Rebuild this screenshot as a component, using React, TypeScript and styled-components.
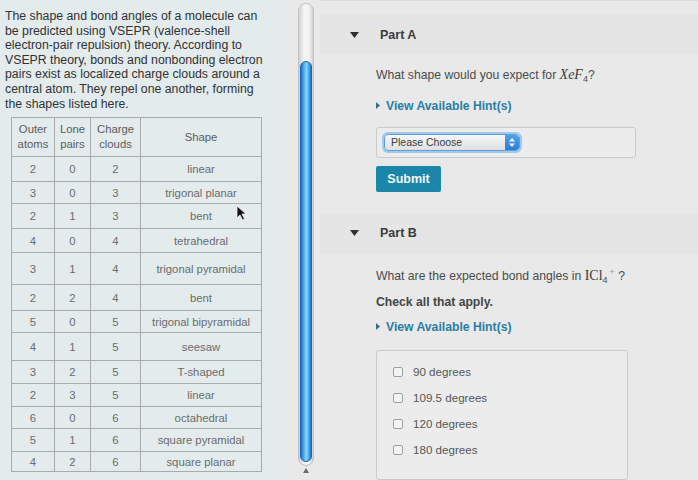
import React from "react";
import styled, { createGlobalStyle } from "styled-components";

const GlobalStyle = createGlobalStyle`
    html, body {
        margin: 0;
        padding: 0;
        background: #e8e9e8;
    }
    * {
        box-sizing: border-box;
    }
`

const Page = styled.div`
    width: 698px;
    height: 480px;
    display: flex;
    flex-direction: row;
    overflow: hidden;
    background: #e8e9e8;
    font-family: "Liberation Sans", Arial, sans-serif;
`

const LeftPane = styled.div`
    position: relative;
    width: 286px;
    height: 100%;
    background: #e3ebed;
    padding: 9px 0 0 5px;
    flex-shrink: 0;
`

const Intro = styled.p`
    margin: 0;
    font-size: 12.3px;
    line-height: 14.6px;
    color: #303234;
    white-space: nowrap;
`

const Table = styled.table`
    margin: 6px 0 0 6px;
    width: 251px;
    border-collapse: collapse;
    border: 1px solid #9c9fa0;
    font-size: 11.3px;
    color: #6a6c6d;
    text-align: center;

    th, td {
        border: 1px solid #a8abac;
        padding: 0;
    }
    th {
        font-weight: 400;
        line-height: 15px;
        color: #5a5c5e;
        height: 39px;
    }
`

const Row = styled.tr<{ $h: number }>`
    height: ${(p) => p.$h}px;
`

const Cursor = styled.svg`
    position: absolute;
    left: 236px;
    top: 205px;
`

const ScrollColumn = styled.div`
    width: 34px;
    height: 100%;
    display: flex;
    flex-direction: column;
    align-items: center;
    padding: 3px 0 0 6px;
    flex-shrink: 0;
`

const Track = styled.div`
    width: 16px;
    height: 463px;
    border-radius: 8px;
    background: linear-gradient(90deg, #cfd2d3, #f6f7f7 40%, #f3f4f4 70%, #cfd2d3);
    border: 1px solid #bfc2c3;
    display: flex;
    flex-direction: column;
    padding: 57px 1px 3px;
`

const Thumb = styled.div`
    flex: 1;
    border-radius: 7px;
    background: linear-gradient(90deg, #1f6fc9, #4fb0ee 30%, #8ad3f8 55%, #45a6e6 80%, #1f6fc9);
    border: 1px solid #1d63b5;
`

const ScrollArrow = styled.div`
    margin-top: 2px;
    width: 0;
    height: 0;
    border-left: 3px solid transparent;
    border-right: 3px solid transparent;
    border-bottom: 5px solid #6b6e70;
`

const RightPane = styled.div`
    flex: 1;
    height: 100%;
    padding-top: 14px;
    display: flex;
    flex-direction: column;
    border-top: 1px solid #d9dbdb;
`

const PartHeader = styled.div`
    height: 44px;
    display: flex;
    align-items: center;
    gap: 21px;
    padding-left: 30px;
    background: #e4e5e4;
    font-size: 12.5px;
    font-weight: 700;
    color: #3a3b3c;
`

const PartBody = styled.div<{ $top: number }>`
    padding-left: 56px;
    padding-top: ${(p) => p.$top}px;
    display: flex;
    flex-direction: column;
    align-items: flex-start;
`

const Question = styled.div<{ $gap: number }>`
    font-size: 12.2px;
    line-height: 16px;
    color: #4a4c4d;
    margin-bottom: ${(p) => p.$gap}px;
`

const Math = styled.span<{ $italic?: boolean }>`
    font-family: "Liberation Serif", "Times New Roman", serif;
    font-size: 14px;
    font-style: ${(p) => (p.$italic ? "italic" : "normal")};
    color: #3c3d3e;
`

const Sub = styled.sub`
    font-size: 9px;
    vertical-align: -3px;
`

const Sup = styled.sup`
    font-size: 9px;
    color: #9a9c9d;
    vertical-align: 5px;
    margin-left: 2px;
`

const Strong = styled.div`
    font-size: 12.2px;
    line-height: 16px;
    font-weight: 700;
    color: #434546;
    margin-bottom: 9px;
`

const Hint = styled.div<{ $gap: number }>`
    display: flex;
    align-items: center;
    gap: 6px;
    font-size: 12.2px;
    line-height: 16px;
    font-weight: 700;
    color: #2a7ea6;
    margin-bottom: ${(p) => p.$gap}px;
`

const AnswerBox = styled.div<{ $w: number; $h: number }>`
    width: ${(p) => p.$w}px;
    height: ${(p) => p.$h}px;
    border: 1px solid #c9cbcb;
    border-radius: 3px;
    background: #ebeceb;
`

const SelectBox = styled(AnswerBox)`
    display: flex;
    align-items: center;
    padding-left: 7px;
`

const FakeSelect = styled.div`
    width: 136px;
    height: 17px;
    border: 1px solid #5b9fdc;
    border-radius: 4px;
    box-shadow: 0 0 0 2px rgba(110, 170, 230, 0.55);
    background: linear-gradient(#f6f7f7, #dfe1e2);
    display: flex;
    align-items: center;
    justify-content: space-between;
    padding-left: 6px;
    font-size: 10.5px;
    color: #3a3b3c;
    overflow: hidden;
`

const Stepper = styled.div`
    width: 14px;
    height: 100%;
    background: linear-gradient(#4ea4ea, #2b7dd3);
    border-radius: 0 3px 3px 0;
    display: flex;
    align-items: center;
    justify-content: center;
`

const SubmitButton = styled.button`
    margin-top: 8px;
    width: 65px;
    height: 26px;
    border: 0;
    border-radius: 2px;
    background: #1b86a8;
    color: #f4f8fa;
    font-family: "Liberation Sans", Arial, sans-serif;
    font-size: 12.5px;
    font-weight: 700;
    padding: 0;
`

const Spacer = styled.div<{ $h: number }>`
    height: ${(p) => p.$h}px;
`

const OptionList = styled(AnswerBox)`
    padding: 8px 0 0 16px;
    display: flex;
    flex-direction: column;
`

const Option = styled.label`
    height: 26px;
    display: flex;
    align-items: center;
    gap: 10px;
    font-size: 11.6px;
    color: #555758;
`

const Check = styled.span`
    width: 10px;
    height: 10px;
    border: 1px solid #9da0a1;
    border-radius: 2px;
    background: #f3f4f4;
`

const introLines = [
    "The shape and bond angles of a molecule can",
    "be predicted using VSEPR (valence-shell",
    "electron-pair repulsion) theory. According to",
    "VSEPR theory, bonds and nonbonding electron",
    "pairs exist as localized charge clouds around a",
    "central atom. They repel one another, forming",
    "the shapes listed here.",
];

const rows: [string, string, string, string, number][] = [
    ["2", "0", "2", "linear", 25],
    ["3", "0", "3", "trigonal planar", 22],
    ["2", "1", "3", "bent", 25],
    ["4", "0", "4", "tetrahedral", 24],
    ["3", "1", "4", "trigonal pyramidal", 32],
    ["2", "2", "4", "bent", 26],
    ["5", "0", "5", "trigonal bipyramidal", 22],
    ["4", "1", "5", "seesaw", 28],
    ["3", "2", "5", "T-shaped", 23],
    ["2", "3", "5", "linear", 23],
    ["6", "0", "6", "octahedral", 22],
    ["5", "1", "6", "square pyramidal", 23],
    ["4", "2", "6", "square planar", 20],
];

function DownTriangle() {
    return (
        <svg width="9" height="6" viewBox="0 0 9 6">
            <polygon points="0,0 9,0 4.5,6" fill="#2e3031" />
        </svg>
    );
}

function HintLink({ gap }: { gap: number }) {
    return (
        <Hint $gap={gap}>
            <svg width="4" height="7" viewBox="0 0 4 7">
                <polygon points="0,0 4,3.5 0,7" fill="#3a6f8a" />
            </svg>
            View Available Hint(s)
        </Hint>
    );
}

export default function App() {
    return (
        <>
            <GlobalStyle />
            <Page>
                <LeftPane>
                    <Intro>
                        {introLines.map((l, i) => (
                            <React.Fragment key={i}>
                                {l}
                                {i < introLines.length - 1 && <br />}
                            </React.Fragment>
                        ))}
                    </Intro>
                    <Table>
                        <colgroup>
                            <col style={{ width: 43 }} />
                            <col style={{ width: 36 }} />
                            <col style={{ width: 50 }} />
                            <col />
                        </colgroup>
                        <thead>
                            <tr>
                                <th>Outer<br />atoms</th>
                                <th>Lone<br />pairs</th>
                                <th>Charge<br />clouds</th>
                                <th>Shape</th>
                            </tr>
                        </thead>
                        <tbody>
                            {rows.map((r, i) => (
                                <Row key={i} $h={r[4]}>
                                    <td>{r[0]}</td>
                                    <td>{r[1]}</td>
                                    <td>{r[2]}</td>
                                    <td>{r[3]}</td>
                                </Row>
                            ))}
                        </tbody>
                    </Table>
                    <Cursor width="11" height="16" viewBox="0 0 11 16">
                        <polygon points="1,1 1,13 4,10 6.5,15 8.5,14 6,9 10,9" fill="#111" stroke="#f0f0f0" strokeWidth="0.8" />
                    </Cursor>
                </LeftPane>

                <ScrollColumn>
                    <Track>
                        <Thumb />
                    </Track>
                    <ScrollArrow />
                </ScrollColumn>

                <RightPane>
                    <PartHeader>
                        <DownTriangle />
                        Part A
                    </PartHeader>
                    <PartBody $top={12}>
                        <Question $gap={11}>
                            What shape would you expect for <Math $italic>XeF</Math>
                            <Sub>4</Sub>?
                        </Question>
                        <HintLink gap={13} />
                        <SelectBox $w={260} $h={31}>
                            <FakeSelect>
                                Please Choose
                                <Stepper>
                                    <svg width="6" height="9" viewBox="0 0 6 9">
                                        <polygon points="3,0 6,3.5 0,3.5" fill="#fff" />
                                        <polygon points="0,5.5 6,5.5 3,9" fill="#fff" />
                                    </svg>
                                </Stepper>
                            </FakeSelect>
                        </SelectBox>
                        <SubmitButton>Submit</SubmitButton>
                    </PartBody>

                    <Spacer $h={24} />

                    <PartHeader>
                        <DownTriangle />
                        Part B
                    </PartHeader>
                    <PartBody $top={11}>
                        <Question $gap={6}>
                            What are the expected bond angles in <Math>ICl</Math>
                            <Sub>4</Sub>
                            <Sup>+</Sup> ?
                        </Question>
                        <Strong>Check all that apply.</Strong>
                        <HintLink gap={15} />
                        <OptionList $w={252} $h={130}>
                            {["90 degrees", "109.5 degrees", "120 degrees", "180 degrees"].map((o) => (
                                <Option key={o}>
                                    <Check />
                                    {o}
                                </Option>
                            ))}
                        </OptionList>
                    </PartBody>
                </RightPane>
            </Page>
        </>
    );
}
